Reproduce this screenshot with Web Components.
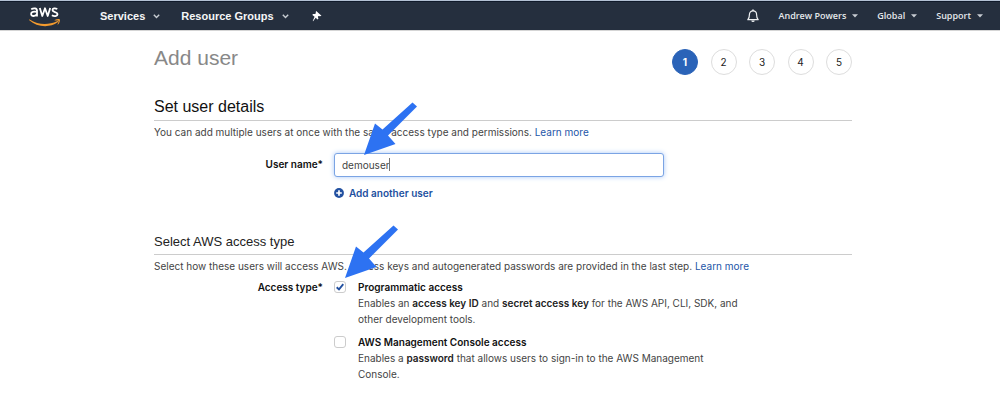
<!DOCTYPE html>
<html lang="en">
<head>
<meta charset="utf-8">
<title>Add user</title>
<style>
body { margin: 0; background: #fff; color: #444; font: 10px/16px Inter, "Liberation Sans", Arial, sans-serif; }
</style>
</head>
<body>
<aws-header></aws-header>
<add-user-page></add-user-page>

<script>
function define(name, html, setup) {
  const template = document.createElement('template');
  template.innerHTML = html;
  customElements.define(name, class extends HTMLElement {
    constructor() {
      super();
      this.attachShadow({ mode: 'open' }).append(template.content.cloneNode(true));
    }
    connectedCallback() {
      if (setup) setup(this, this.shadowRoot);
    }
  });
}

define('nav-menu', `
<style>
:host { display: block; }
button { display: flex; align-items: center; gap: 8px; padding: 0; border: 0; background: none; color: #f5f6f7; font: bold 11px/16px "Liberation Sans", Arial, sans-serif; white-space: nowrap; }
:host([minor]) button { gap: 6px; font: 600 9px/16px "Open Sans", sans-serif; color: #e4e7ea; }
svg { display: block; }
.caret, :host([minor]) .chevron { display: none; }
:host([minor]) .caret { display: block; }
</style>
<button type="button"><slot></slot>
<svg class="chevron" width="7" height="5" viewBox="0 0 7 5"><path d="M.8 .8 3.5 3.6 6.2 .8" fill="none" stroke="#c8cdd3" stroke-width="1.4"/></svg>
<svg class="caret" width="6" height="4" viewBox="0 0 6 4"><path d="M0 .3h6L3 3.5z" fill="#c8cdd3"/></svg>
</button>`);

define('aws-header', `
<style>
:host { display: block; border-top: 1px solid #b3c1d3; border-bottom: 1px solid #d5d5d5; }
nav { display: flex; align-items: center; height: 29px; box-sizing: border-box; border-top: 1px solid #101a2a; background: #252f3e; padding: 0 17px 0 29px; }
svg { display: block; }
.logo { margin-right: 39px; }
.groups { margin-left: 21px; }
.pin { margin-left: 23px; padding: 0; border: 0; background: none; }
.account { display: flex; align-items: center; gap: 19px; margin-left: auto; }
.bell { padding: 0; border: 0; background: none; }
</style>
<nav>
<a class="logo" href="#" aria-label="AWS">
<svg width="32" height="22" viewBox="0 0 32 22" fill="none">
<g stroke="#fff" stroke-width="1.8" stroke-linejoin="round">
<path d="M2.2 4.3C4.5 2.9 8 2.7 8 5.6V11.4M8 6.8C4.8 6.2 2.1 6.6 2.1 8.9c0 2.9 4.5 2.7 5.9 0"/>
<path d="M10.8 3 13.3 11 16 3.3 18.7 11 21.2 3"/>
<path d="M28.3 4C26.2 3 23.5 3.1 23.5 5.1c0 2.5 5 1.4 5 4 0 2.4-3.5 2.5-5.6 1.2"/>
</g>
<path d="M.6 14.5C9.3 20.1 19.5 20.2 28 16.2c1-.4 1.5.5.7 1.1C20.5 23.2 7.8 22.2.3 15.2c-.5-.5-.2-1 .3-.7z" fill="#f29a2e"/>
<path d="M25.7 15c2-1.1 4.6-1.2 5.1-.6.4.6-.1 3.7-1.8 5.2-.4.3-.6.1-.4-.3.5-1.2 1.2-2.9.9-3.5-.3-.5-2.2-.4-3.5-.3-.5.1-.7-.2-.3-.5z" fill="#f29a2e"/>
</svg></a>
<nav-menu>Services</nav-menu>
<nav-menu class="groups">Resource Groups</nav-menu>
<button class="pin" type="button" aria-label="Pin">
<svg width="10" height="11" viewBox="0 0 10 11"><path d="M4.2 0 9.5 4.8 8 5.2 6.6 5 5.9 5.8 6.4 7.8 5.5 8.4 3.7 6.8 1.1 10.3.7 10 2.6 5.8.4 3.9.9 3.1 3.2 3 3.9 2.1 3.7.9z" fill="#fff"/></svg>
</button>
<div class="account">
<button class="bell" type="button" aria-label="Notifications">
<svg width="12" height="14" viewBox="0 0 12 14"><path d="M.8 10.7C2.2 9.5 2.4 8 2.4 5.8 2.4 3.3 4 1.9 6 1.9s3.600 1.400 3.600 3.900c0 2.200.2 3.700 1.600 4.900z" fill="none" stroke="#eef0f2" stroke-width="1.2" stroke-linejoin="round"/><path d="M5.200 .6h1.600v1.400H5.200zM4.300 11.400h3.400a1.700 1.500 0 0 1-3.400 0z" fill="#eef0f2"/></svg>
</button>
<nav-menu minor>Andrew Powers</nav-menu>
<nav-menu minor>Global</nav-menu>
<nav-menu minor>Support</nav-menu>
</div>
</nav>`);

define('step-list', `
<style>
:host { display: block; }
ol { display: flex; justify-content: space-between; width: 180px; margin: 0; padding: 0; list-style: none; }
li { box-sizing: border-box; width: 26px; height: 26px; border: 1px solid #ddd; border-radius: 50%; color: #222; font-size: 10px; line-height: 25px; text-align: center; }
li[aria-current] { border-color: #2a63b8; background: #2a63b8; color: #fff; font-weight: bold; }
</style>
<ol><li aria-current="step">1</li><li>2</li><li>3</li><li>4</li><li>5</li></ol>`);

define('form-section', `
<style>
:host { display: block; }
h2 { margin: 0; border-bottom: 1px solid #ccc; color: #111; font: 16px/26px "Liberation Sans", Arial, sans-serif; }
:host([minor]) h2 { color: #222; font-size: 13px; line-height: 24px; }
p { margin: 3px 0 0; }
</style>
<h2><slot name="heading"></slot></h2>
<p><slot name="intro"></slot></p>
<slot></slot>`);

define('text-link', `
<style>a { color: #2456a8; text-decoration: none; }</style>
<a href="#"><slot></slot></a>`);

define('pointer-arrow', `
<style>
:host { position: absolute; z-index: 1; pointer-events: none; }
svg { display: block; }
</style>
<svg width="53" height="53" viewBox="0 0 53 53"><path d="M0 53 11 21.500 18.500 27.500 48.500 .5 53 4.500 24 33.500 31.500 42z" fill="#2d72f2"/></svg>`);

define('user-name-field', `
<style>
:host { display: grid; grid-template-columns: 169px 1fr; column-gap: 11px; margin-top: 13px; }
label { color: #111; font-weight: 600; line-height: 23px; text-align: right; }
.box { position: relative; width: 330px; }
input { box-sizing: border-box; display: block; width: 100%; height: 24px; padding: 0 7px; border: 1px solid #7ba4e4; border-radius: 3px; outline: 0; background: #fff; box-shadow: 0 0 5px #a9c9f8; color: #444; font: inherit; }
.caret { position: absolute; left: 55px; top: 5px; width: 1px; height: 13px; background: #777; }
pointer-arrow { left: 30px; bottom: 22px; }
button { grid-column: 2; justify-self: start; display: flex; align-items: center; gap: 5px; margin-top: 8px; padding: 0; border: 0; background: none; color: #2250a0; font: inherit; font-weight: 600; }
svg { display: block; }
</style>
<label for="name">User name*</label>
<div class="box"><input id="name" type="text" value="demouser"><span class="caret"></span><pointer-arrow></pointer-arrow></div>
<button type="button"><svg width="10" height="10" viewBox="0 0 10 10"><circle cx="5" cy="5" r="4.900" fill="#2250a0"/><path d="M5 2.200v5.600M2.200 5h5.600" stroke="#fff" stroke-width="1.700"/></svg>Add another user</button>`);

define('check-option', `
<style>
:host { display: grid; grid-template-columns: 12px 1fr; column-gap: 12px; }
.mark { position: relative; padding-top: 2px; }
input { appearance: none; box-sizing: border-box; display: block; width: 12px; height: 12px; margin: 0; border: 1px solid #ccc; border-radius: 3px; background: #fff; }
svg { display: none; position: absolute; left: 2px; top: 4px; }
input:checked + svg { display: block; }
label { color: #111; font-weight: 600; }
p { margin: 0; }
</style>
<div class="mark"><input id="box" type="checkbox" aria-describedby="about"><svg width="8" height="8" viewBox="0 0 8 8"><path d="M.7 4.200 3 6.400 7.300 1.100" fill="none" stroke="#2250a0" stroke-width="1.900"/></svg></div>
<div><label for="box"><slot name="label"></slot></label><p id="about"><slot></slot></p></div>`,
(host, root) => { root.querySelector('input').checked = host.hasAttribute('checked'); });

define('access-type-field', `
<style>
:host { display: grid; grid-template-columns: 169px 1fr; column-gap: 11px; margin-top: 5px; }
.name { color: #111; font-weight: 600; text-align: right; }
.options { position: relative; display: grid; gap: 7px; max-width: 412px; }
b { color: #222; font-weight: 600; }
pointer-arrow { left: 11px; top: -54px; }
</style>
<div class="name" id="name">Access type*</div>
<div class="options" role="group" aria-labelledby="name">
<check-option checked><span slot="label">Programmatic access</span>Enables an <b>access key ID</b> and <b>secret access key</b> for the AWS API, CLI, SDK, and other development tools.</check-option>
<check-option><span slot="label">AWS Management Console access</span>Enables a <b>password</b> that allows users to sign-in to the AWS Management Console.</check-option>
<pointer-arrow></pointer-arrow>
</div>`);

define('add-user-page', `
<style>
:host { display: block; padding: 14px 148px 32px 154px; }
header { display: flex; justify-content: space-between; margin-bottom: 19px; }
h1 { margin: 0; color: #888; font: 21px/26px "Liberation Sans", Arial, sans-serif; }
step-list { margin-top: 4px; }
.access { margin-top: 29px; }
</style>
<main>
<header><h1>Add user</h1><step-list></step-list></header>
<form-section>
<span slot="heading">Set user details</span>
<span slot="intro">You can add multiple users at once with the same access type and permissions. <text-link>Learn more</text-link></span>
<user-name-field></user-name-field>
</form-section>
<form-section class="access" minor>
<span slot="heading">Select AWS access type</span>
<span slot="intro">Select how these users will access AWS. Access keys and autogenerated passwords are provided in the last step. <text-link>Learn more</text-link></span>
<access-type-field></access-type-field>
</form-section>
</main>`);
</script>
</body>
</html>
